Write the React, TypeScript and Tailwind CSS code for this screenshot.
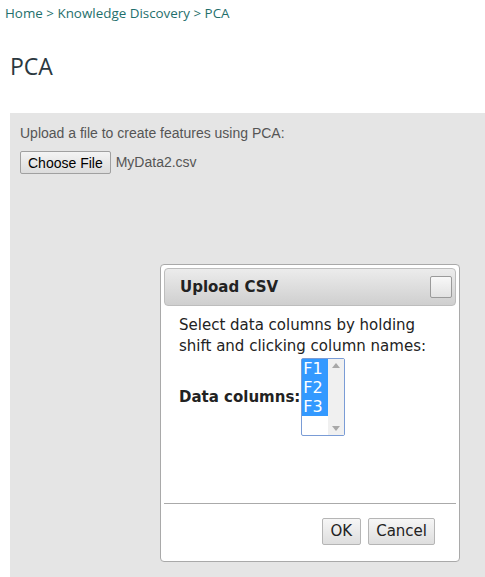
import React from "react";

const options = ["F1", "F2", "F3"];

export default function App() {
  return (
    <div className="w-[485px] h-[577px] overflow-hidden bg-white flex flex-col">
      {/* Breadcrumb */}
      <div className="pl-[5px] pt-[4px] h-[24px] text-[13.4px] leading-[18px] text-[#1f6f6c] font-['Open_Sans',sans-serif]">
        Home &gt; Knowledge Discovery &gt; PCA
      </div>

      <h1 className="pl-[10px] mt-[28px] text-[23px] leading-[28px] text-[#2b3840] font-['Open_Sans',sans-serif]">
        PCA
      </h1>

      {/* Gray panel */}
      <div className="ml-[10px] mt-[33px] flex-1 bg-[#e5e5e5] pl-[10px] pt-[12px] font-['Liberation_Sans',Arial,sans-serif]">
        <p className="text-[14px] leading-[17px] text-[#555]">
          Upload a file to create features using PCA:
        </p>
        <div className="mt-[9px] flex items-center gap-[5px] text-[14px] text-[#333]">
          <button className="h-[23px] px-[7px] border border-[#a0a0a0] rounded-[2px] bg-gradient-to-b from-[#f4f4f4] to-[#dcdcdc] text-[14px] leading-[20px] text-black">
            Choose File
          </button>
          <span className="text-[#555]">MyData2.csv</span>
        </div>

        {/* Dialog */}
        <div className="ml-[140px] mt-[90px] w-[300px] h-[298px] bg-white border border-[#a9a9a9] rounded-[4px] p-[3px] flex flex-col font-['DejaVu_Sans',Verdana,sans-serif]">
          <div className="h-[38px] shrink-0 rounded-[4px] border border-[#bdbdbd] bg-gradient-to-b from-[#ececec] to-[#cfcfcf] flex items-center justify-between pl-[15px] pr-[3px]">
            <span className="text-[15px] font-bold text-[#222]">Upload CSV</span>
            <span className="w-[22px] h-[22px] border border-[#9a9a9a] rounded-[2px] bg-gradient-to-b from-[#f8f8f8] to-[#e2e2e2]" />
          </div>

          <div className="flex-1 px-[15px] pt-[9px]">
            <p className="text-[15px] leading-[21px] text-[#222]">
              Select data columns by holding shift and clicking column names:
            </p>
            <div className="mt-[1px] flex items-center">
              <span className="text-[15px] font-bold text-[#222]">Data columns:</span>
              <div className="ml-[1px] w-[44px] h-[78px] border border-[#7a9cd6] rounded-[2px] flex">
                <div className="flex-1 flex flex-col">
                  {options.map((o) => (
                    <div
                      key={o}
                      className="h-[19px] bg-[#3399ff] text-white text-[16px] leading-[19px] pl-[1px]"
                    >
                      {o}
                    </div>
                  ))}
                </div>
                <div className="w-[16px] bg-[#f0f0f0] flex flex-col justify-between items-center py-[4px]">
                  <svg width="8" height="5" viewBox="0 0 8 5">
                    <path d="M0 5 L4 0 L8 5 Z" fill="#a8a8a8" />
                  </svg>
                  <svg width="8" height="5" viewBox="0 0 8 5">
                    <path d="M0 0 L4 5 L8 0 Z" fill="#a8a8a8" />
                  </svg>
                </div>
              </div>
            </div>
          </div>

          <div className="border-t border-[#aaa] h-[55px] shrink-0 flex items-center justify-end gap-[7px] pr-[21px] pt-[1px]">
            <button className="h-[27px] px-[8px] border border-[#b5b5b5] rounded-[2px] bg-gradient-to-b from-[#f6f6f6] to-[#dedede] text-[15px] text-[#222]">
              OK
            </button>
            <button className="h-[27px] px-[7px] border border-[#b5b5b5] rounded-[2px] bg-gradient-to-b from-[#f6f6f6] to-[#dedede] text-[15px] text-[#222]">
              Cancel
            </button>
          </div>
        </div>
      </div>
    </div>
  );
}
